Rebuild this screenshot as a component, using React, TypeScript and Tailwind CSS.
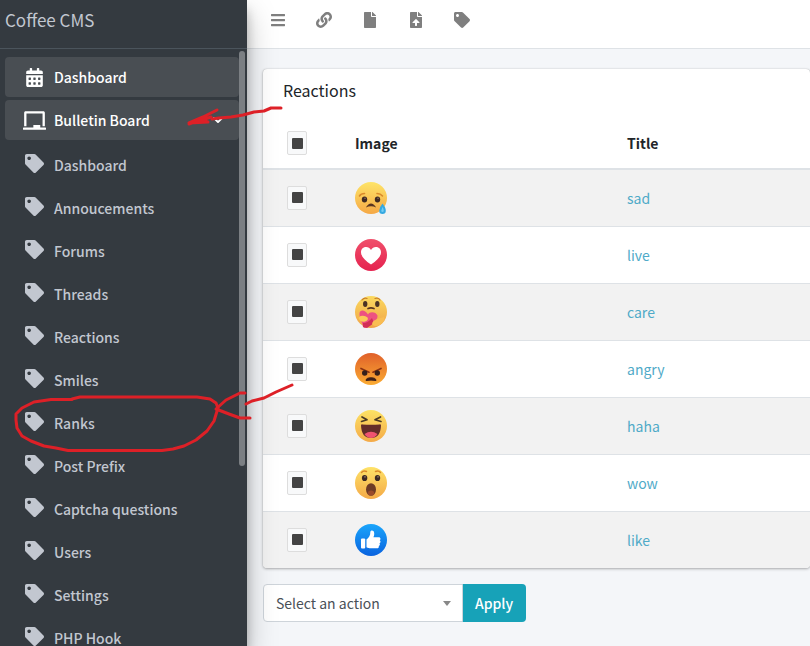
import type { ComponentType, ReactNode } from "react";
import { FaBars, FaCalendarAlt, FaChalkboard, FaChevronDown, FaFile, FaFileUpload, FaLink, FaTag } from "react-icons/fa";

type Icon = ComponentType<{ className?: string }>;

const subItems = [
  "Dashboard",
  "Annoucements",
  "Forums",
  "Threads",
  "Reactions",
  "Smiles",
  "Ranks",
  "Post Prefix",
  "Captcha questions",
  "Users",
  "Settings",
  "PHP Hook",
];

const tools: { label: string; icon: Icon }[] = [
  { label: "Menu", icon: FaBars },
  { label: "Links", icon: FaLink },
  { label: "Pages", icon: FaFile },
  { label: "Upload", icon: FaFileUpload },
  { label: "Tags", icon: FaTag },
];

function Face({ id, from, to, children }: { id: string; from: string; to: string; children: ReactNode }) {
  return (
    <svg viewBox="0 0 32 32" className="block size-8 overflow-visible" role="img" aria-label={id}>
      <defs>
        <linearGradient id={`g-${id}`} x1="0" y1="0" x2="0" y2="1">
          <stop offset="0" stopColor={from} />
          <stop offset="1" stopColor={to} />
        </linearGradient>
      </defs>
      <circle cx="16" cy="16" r="16" fill={`url(#g-${id})`} />
      {children}
    </svg>
  );
}

const reactions: { title: string; image: ReactNode }[] = [
  {
    title: "sad",
    image: (
      <Face id="sad" from="#fee468" to="#f5a845">
        <path d="M4.500 14Q6 11.500 9.500 11.500M22 11.500Q25.500 11.500 27.500 14" stroke="#d98a2b" strokeWidth="1.600" fill="none" strokeLinecap="round" />
        <ellipse cx="9.500" cy="17.500" rx="2.700" ry="3" fill="#3f2a22" />
        <ellipse cx="22.500" cy="17.500" rx="2.700" ry="3" fill="#3f2a22" />
        <circle cx="10" cy="16.300" r="0.800" fill="#8a7061" />
        <circle cx="23" cy="16.300" r="0.800" fill="#8a7061" />
        <path d="M10.800 25.500Q16 17.500 21.200 25.500Q16 22.800 10.800 25.500Z" fill="#5a3520" />
        <path d="M27.500 21.500Q31 26 30.800 28.800A3.300 3.300 0 0 1 24.200 28.800Q24.500 25 27.500 21.500Z" fill="#36a9e1" />
        <path d="M27.500 25Q29 27.500 28.800 29A1.400 1.400 0 0 1 26.200 29Z" fill="#73cdf4" />
      </Face>
    ),
  },
  {
    title: "live",
    image: (
      <Face id="live" from="#f0506b" to="#e5224f">
        <path d="M16 25.500C10 21.500 6 17.500 6 13.200C6 7.500 13.500 6 16 11C18.500 6 26 7.500 26 13.200C26 17.500 22 21.500 16 25.500Z" fill="#fff" />
      </Face>
    ),
  },
  {
    title: "care",
    image: (
      <Face id="care" from="#fbd95f" to="#f0a347">
        <path d="M7 4Q9 1.500 12 2.500M20 2.500Q23.500 1.500 25 4" stroke="#c9812c" strokeWidth="1.200" fill="none" strokeLinecap="round" />
        <ellipse cx="10.200" cy="8" rx="2.200" ry="2.900" fill="#4b3325" />
        <ellipse cx="22.300" cy="8" rx="2.200" ry="2.900" fill="#4b3325" />
        <path d="M13 12.500Q16 11.400 19 12.500" stroke="#5a3520" strokeWidth="1.700" fill="none" strokeLinecap="round" />
        <path d="M4.500 17C5 13.500 10 13.500 13 18.500C14.500 15 21 15.500 22.500 19.500C23 24 17 29 10 32L8 31C7.500 26 4 22 4.500 17Z" fill="#ed5281" />
        <path d="M8 27Q13 27 17 22L19 27L12 32L8 31Z" fill="#d22f56" />
        <path d="M5.500 20Q10 19 12.500 21.500Q14 24 10 25.500Q5 26.500 3.500 22Z" fill="#fbcb59" />
        <path d="M29 21Q21 23 18.500 25Q15 29 20 30Q26 30 29.500 24Z" fill="#f9bd53" />
      </Face>
    ),
  },
  {
    title: "angry",
    image: (
      <Face id="angry" from="#e0602a" to="#fbac33">
        <path d="M6 15.500L14 19.200M26 15.500L18 19.200" stroke="#8b3212" strokeWidth="1.700" strokeLinecap="round" />
        <circle cx="9.700" cy="20" r="2.700" fill="#35201b" />
        <circle cx="22.300" cy="20" r="2.700" fill="#35201b" />
        <path d="M11 27.500Q11 24.800 16 24.800Q21 24.800 21 27.500Q16 26.700 11 27.500Z" fill="#3f211a" stroke="#3f211a" strokeLinejoin="round" />
      </Face>
    ),
  },
  {
    title: "haha",
    image: (
      <Face id="haha" from="#fde264" to="#f4aa48">
        <path d="M7 7L12 9.800L6.500 11.500M25.500 7L20 9.800L26 11.500" stroke="#4b3a24" strokeWidth="1.700" fill="none" strokeLinecap="round" strokeLinejoin="round" />
        <path d="M6 15.500Q6 14.200 7.500 14.400Q16 15.200 24.500 14.400Q26 14.200 26 15.500Q25.500 28 16 28Q6.500 28 6 15.500Z" fill="#642c29" />
        <path d="M9.500 24Q16 19.500 22.500 24Q20 28 16 28Q12 28 9.500 24Z" fill="#ef5270" />
      </Face>
    ),
  },
  {
    title: "wow",
    image: (
      <Face id="wow" from="#fee268" to="#f4aa48">
        <path d="M6.500 5.500Q8.500 3 11.500 4.500M20.500 4.500Q23.500 3 25.500 5.500" stroke="#d98a2b" strokeWidth="1.500" fill="none" strokeLinecap="round" />
        <ellipse cx="9.600" cy="11" rx="2.700" ry="3.100" fill="#3b2923" />
        <ellipse cx="22.500" cy="11" rx="2.700" ry="3.100" fill="#3b2923" />
        <circle cx="10" cy="9.800" r="0.900" fill="#8a7061" />
        <circle cx="23" cy="9.800" r="0.900" fill="#8a7061" />
        <ellipse cx="16" cy="22.500" rx="5" ry="6.300" fill="#6e3b25" />
        <ellipse cx="16" cy="26" rx="3.200" ry="2.500" fill="#9a4b2b" />
      </Face>
    ),
  },
  {
    title: "like",
    image: (
      <Face id="like" from="#1aa5fb" to="#0a63df">
        <rect x="6" y="14.500" width="4.200" height="10" rx="1" fill="#fff" />
        <path d="M11.500 15.500C14 13.500 15.500 11 15.300 8.200C15.200 6.300 18.800 5.500 19.200 9C19.400 10.800 18.800 12.200 18.500 13.200H23.500C25.800 13.200 26 15.500 24.700 16.300C26 17.200 25.600 18.800 24.500 19.300C25.300 20.500 24.800 21.700 23.800 22C24.200 23.500 23.200 24.300 22 24.300H16C14 24.300 13 23.700 11.500 23.200Z" fill="#fff" />
      </Face>
    ),
  },
];

function Tick({ label }: { label: string }) {
  return (
    <input
      type="checkbox"
      aria-label={label}
      className="grid h-6 w-5 appearance-none place-content-center rounded-xs border border-[#dddddd] bg-[#f8f9fa] before:block before:size-[11px] before:rounded-[1px] before:bg-[#444444]"
    />
  );
}

function Sidebar() {
  return (
    <aside className="relative z-10 flex w-[247px] shrink-0 flex-col overflow-visible bg-[#343a40] text-[#c2c7d0] shadow-[0_14px_28px_rgba(0,0,0,0.25),0_10px_10px_rgba(0,0,0,0.22)]">
      <a href="#" className="flex h-[49px] shrink-0 items-center border-b border-[#4b545c] px-[5px] pb-2 text-[17px] text-[#c2c7d0]">
        Coffee CMS
      </a>
      <nav className="min-h-0 flex-1 overflow-hidden py-2 pr-2 pl-[5px] font-medium">
        <ul className="flex flex-col gap-[3px] text-white">
          <li>
            <a href="#" className="flex h-10 items-center gap-2 rounded bg-[#494e53] pl-[18px]">
              <span className="flex w-[23px] justify-center">
                <FaCalendarAlt className="size-[19px]" />
              </span>
              Dashboard
            </a>
          </li>
          <li>
            <a href="#" className="flex h-10 items-center gap-2 rounded bg-[#494e53] pr-[15px] pl-[18px]">
              <span className="flex w-[23px] justify-center">
                <FaChalkboard className="size-[23px]" />
              </span>
              <span className="flex-1">Bulletin Board</span>
              <FaChevronDown className="size-3" />
            </a>
            <ul className="flex flex-col gap-[3px] pt-[5px] text-[#c2c7d0]">
              {subItems.map((item) => (
                <li key={item}>
                  <a href="#" className="flex h-10 items-center gap-2 rounded pl-[18px]">
                    <span className="flex w-[23px] justify-center pb-1">
                      <FaTag className="size-[19px]" />
                    </span>
                    {item}
                  </a>
                </li>
              ))}
            </ul>
          </li>
        </ul>
      </nav>
      <div className="absolute top-[51px] right-[2px] h-[415px] w-[6px] rounded-full bg-[#7b7f83]" />
    </aside>
  );
}

function Annotations() {
  return (
    <svg
      viewBox="0 0 320 470"
      className="pointer-events-none absolute top-0 left-0 z-20 h-[470px] w-[320px]"
      fill="none"
      stroke="#dd2027"
      strokeWidth="3"
      strokeLinecap="round"
      strokeLinejoin="round"
      aria-hidden="true"
    >
      <path d="M281 108L271 108L264 111L254 112L243 115L231 117L219 118L212 119" />
      <path d="M217 110L203 117L189 123L208 122M189 124L211 117M193 122L206 120" />
      <path d="M72 399L80 397H197L210 399L216 403L218 408L214 421L207 431L196 440L184 446L173 449L162 450.500H68L56 448L44 446L31 441L22 436L17 428L16 420V414L22 408L34 402L51 399.500H72" />
      <path d="M292 385L276 392L264 398L252 401L246 404" />
      <path d="M245 393H240L226 400L216 409L229 414L240 418H250" />
    </svg>
  );
}

export default function App() {
  return (
    <div className="relative flex h-screen overflow-hidden bg-[#f4f6f9] font-['Noto_Sans_CJK_SC','Noto_Sans',sans-serif] text-sm leading-6 text-[#212529]">
      <Sidebar />
      <div className="flex min-w-0 flex-1 flex-col">
        <header className="flex h-[49px] shrink-0 items-center border-b border-[#dee2e6] bg-white px-2 pb-2 text-[#7f7f7f]">
          {tools.map(({ label, icon: ToolIcon }) => (
            <button key={label} type="button" aria-label={label} className="flex w-[46px] justify-center">
              <ToolIcon className="size-4" />
            </button>
          ))}
        </header>
        <main className="-mr-4 flex flex-col gap-4 px-4 pt-5">
          <section className="overflow-hidden rounded bg-white shadow-[0_0_1px_rgba(0,0,0,0.25),0_1px_3px_rgba(0,0,0,0.3)]">
            <h3 className="px-5 pt-[9px] pb-4 text-base leading-6">Reactions</h3>
            <table className="w-full table-fixed border-collapse text-left">
              <thead>
                <tr className="h-[51px] border-b-2 border-[#dee2e6]">
                  <th className="w-20 pl-6">
                    <Tick label="Select all" />
                  </th>
                  <th className="w-[272px] px-3 font-bold">Image</th>
                  <th className="px-3 font-bold">Title</th>
                </tr>
              </thead>
              <tbody>
                {reactions.map(({ title, image }) => (
                  <tr key={title} className="h-[57px] border-t border-[#dee2e6] odd:bg-[#f2f2f2]">
                    <td className="pl-6">
                      <Tick label={`Select ${title}`} />
                    </td>
                    <td className="px-3">{image}</td>
                    <td className="px-3">
                      <a href="#" className="text-[#4faac8]">
                        {title}
                      </a>
                    </td>
                  </tr>
                ))}
              </tbody>
            </table>
          </section>
          <form className="flex" onSubmit={(event) => event.preventDefault()}>
            <div className="relative">
              <select
                aria-label="Action"
                className="h-[38px] w-[200px] appearance-none rounded-l border border-[#ced4da] bg-white px-3 text-[#495057]"
              >
                <option>Select an action</option>
              </select>
              <span className="pointer-events-none absolute top-[17px] right-3 border-x-4 border-t-[5px] border-x-transparent border-t-[#888888]" />
            </div>
            <button type="submit" className="-ml-px h-[38px] w-16 rounded-r bg-[#17a2b8] font-medium text-white">
              Apply
            </button>
          </form>
        </main>
      </div>
      <Annotations />
    </div>
  );
}
